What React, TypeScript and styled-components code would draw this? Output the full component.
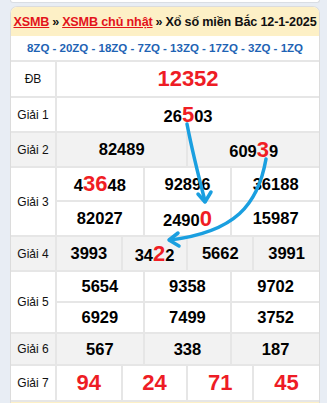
import React from "react";
import styled, { createGlobalStyle } from "styled-components";

const Global = createGlobalStyle`
  html, body { margin: 0; padding: 0; }
  body { background: #e8edf4; font-family: "Liberation Sans", Arial, sans-serif; }
`;

const Page = styled.div`
  position: relative;
  width: 327px;
  height: 403px;
  overflow: hidden;
`;

const Stub = styled.div`
  margin: 0 7px 0 10px;
  height: 2px;
  background: #fff;
  border: 1px solid #d9dde3;
  border-top: none;
  border-radius: 0 0 5px 5px;
`;

const Card = styled.div`
  margin: 3px 7px 0 10px;
  border: 1px solid #dcdcdc;
  border-bottom: none;
  border-radius: 7px 7px 0 0;
  overflow: hidden;
  background: #fff;
`;

const Header = styled.div`
  height: 29px;
  background: #fdf0c6;
  display: flex;
  align-items: center;
  justify-content: center;
  font-size: 12.6px;
  font-weight: 700;
  color: #111;
  white-space: nowrap;
  letter-spacing: -0.15px;
`;

const Crumb = styled.a`
  color: #e3141b;
  text-decoration: underline;
`;

const Sep = styled.span`
  margin: 0 3px;
`;

const ZqRow = styled.div`
  height: 24px;
  display: flex;
  align-items: center;
  justify-content: center;
  font-size: 11.5px;
  font-weight: 700;
  color: #1e63b4;
`;

const Table = styled.table`
  width: 100%;
  border-collapse: collapse;
  table-layout: fixed;
`;

const Row = styled.tr<{ $gray?: boolean; $h: number }>`
  background: ${(p) => (p.$gray ? "#f2f2f2" : "#fff")};
  height: ${(p) => p.$h}px;
`;

const Label = styled.td`
  width: 43px;
  font-size: 12px;
  color: #111;
  text-align: center;
  border: 2px solid #e6e6e6;
  border-left: none;
  padding: 0;
`;

const Cell = styled.td<{ $big?: boolean }>`
  text-align: center;
  border: 2px solid #e6e6e6;
  border-right: none;
  padding: 0;
  font-weight: 700;
  font-size: ${(p) => (p.$big ? "22px" : "16.5px")};
  color: ${(p) => (p.$big ? "#ee1c25" : "#000")};
  line-height: 1;
  white-space: nowrap;
`;

const Hi = styled.span`
  color: #f01d24;
  font-weight: 700;
  font-size: 22px;
  line-height: 1;
`;

const Footer = styled.div`
  height: 3px;
  background: #fdf0c6;
`;

const Arrows = styled.svg`
  position: absolute;
  left: 0;
  top: 0;
  pointer-events: none;
`;

const Col = styled.col<{ $w?: number }>`
  ${(p) => (p.$w ? `width: ${p.$w}px;` : "")}
`;

function Num({ v, hi }: { v: string; hi?: [number, number] }) {
  if (!hi) return <>{v}</>;
  const [a, b] = hi;
  return (
    <>
      {v.slice(0, a)}
      <Hi>{v.slice(a, b)}</Hi>
      {v.slice(b)}
    </>
  );
}

export default function App() {
  const cols = Array.from({ length: 12 });
  return (
    <Page>
      <Global />
      <Stub />
      <Card>
        <Header>
          <Crumb>XSMB</Crumb>
          <Sep>»</Sep>
          <Crumb>XSMB chủ nhật</Crumb>
          <Sep>»</Sep>
          <span>Xổ số miền Bắc 12-1-2025</span>
        </Header>
        <ZqRow>8ZQ - 20ZQ - 18ZQ - 7ZQ - 13ZQ - 17ZQ - 3ZQ - 1ZQ</ZqRow>
        <Table>
          <colgroup>
            <Col $w={45} />
            {cols.map((_, i) => (
              <Col key={i} />
            ))}
          </colgroup>
          <tbody>
            <Row $h={36}>
              <Label>ĐB</Label>
              <Cell colSpan={12} $big>
                12352
              </Cell>
            </Row>
            <Row $h={35}>
              <Label>Giải 1</Label>
              <Cell colSpan={12}>
                <Num v="26503" hi={[2, 3]} />
              </Cell>
            </Row>
            <Row $h={35} $gray>
              <Label>Giải 2</Label>
              <Cell colSpan={6}>82489</Cell>
              <Cell colSpan={6}>
                <Num v="60939" hi={[3, 4]} />
              </Cell>
            </Row>
            <Row $h={34}>
              <Label rowSpan={2}>Giải 3</Label>
              <Cell colSpan={4}>
                <Num v="43648" hi={[1, 3]} />
              </Cell>
              <Cell colSpan={4}>92896</Cell>
              <Cell colSpan={4}>36188</Cell>
            </Row>
            <Row $h={35}>
              <Cell colSpan={4}>82027</Cell>
              <Cell colSpan={4}>
                <Num v="24900" hi={[4, 5]} />
              </Cell>
              <Cell colSpan={4}>15987</Cell>
            </Row>
            <Row $h={35} $gray>
              <Label>Giải 4</Label>
              <Cell colSpan={3}>3993</Cell>
              <Cell colSpan={3}>
                <Num v="3422" hi={[2, 3]} />
              </Cell>
              <Cell colSpan={3}>5662</Cell>
              <Cell colSpan={3}>3991</Cell>
            </Row>
            <Row $h={31}>
              <Label rowSpan={2}>Giải 5</Label>
              <Cell colSpan={4}>5654</Cell>
              <Cell colSpan={4}>9358</Cell>
              <Cell colSpan={4}>9702</Cell>
            </Row>
            <Row $h={31}>
              <Cell colSpan={4}>6929</Cell>
              <Cell colSpan={4}>7499</Cell>
              <Cell colSpan={4}>3752</Cell>
            </Row>
            <Row $h={32} $gray>
              <Label>Giải 6</Label>
              <Cell colSpan={4}>567</Cell>
              <Cell colSpan={4}>338</Cell>
              <Cell colSpan={4}>187</Cell>
            </Row>
            <Row $h={36}>
              <Label>Giải 7</Label>
              <Cell colSpan={3} $big>94</Cell>
              <Cell colSpan={3} $big>24</Cell>
              <Cell colSpan={3} $big>71</Cell>
              <Cell colSpan={3} $big>45</Cell>
            </Row>
          </tbody>
        </Table>
        <Footer />
      </Card>
      <Arrows width="327" height="403" viewBox="0 0 327 403">
        <g fill="none" stroke="#1a9fe0" strokeWidth="3.5" strokeLinecap="round" strokeLinejoin="round">
          <path d="M187 124 C 192 150, 199 178, 205 201" />
          <path d="M198 194 L205 202 L211 192" />
          <path d="M266 159 C 258 205, 235 232, 170 240" />
          <path d="M178 233 L169 240 L179 246" />
        </g>
      </Arrows>
    </Page>
  );
}
